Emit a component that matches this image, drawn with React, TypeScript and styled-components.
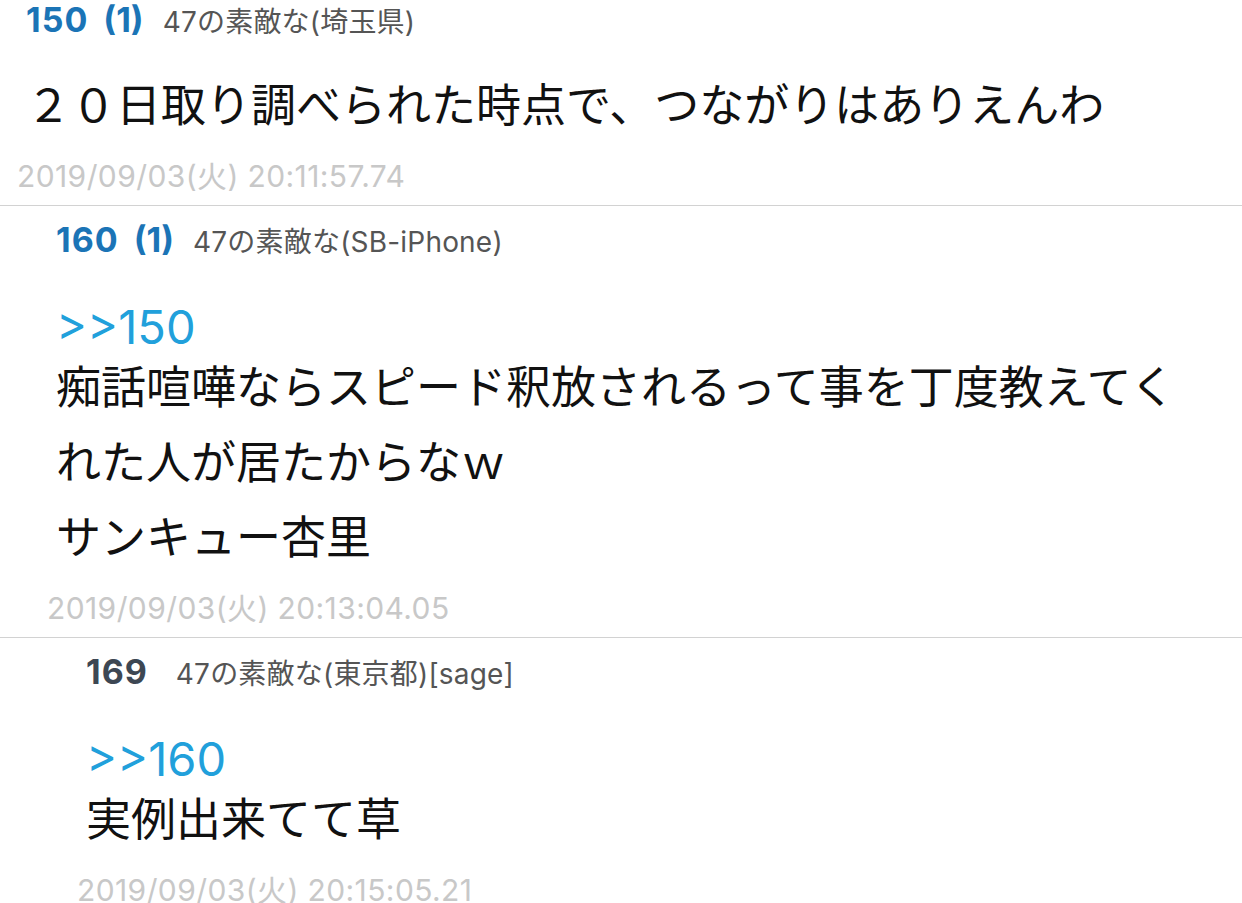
import React from "react";
import styled, { createGlobalStyle, css } from "styled-components";

const FONT = `Inter, "Noto Sans CJK JP", "Noto Sans", sans-serif`;

const GlobalStyle = createGlobalStyle`
  html, body {
    margin: 0;
    padding: 0;
    background: #ffffff;
    font-family: ${FONT};
    overflow: hidden;
  }
`;

const Thread = styled.main`
  width: 1242px;
`;

const Header = styled.header`
  display: flex;
  align-items: baseline;
  height: 40px;
  line-height: 40px;
  padding-left: 9px;
  white-space: nowrap;
`;

const ResNumber = styled.span<{ $replied: boolean }>`
  font-size: 34px;
  font-weight: 700;
  letter-spacing: 1px;
  color: ${(p) => (p.$replied ? "#1b74b6" : "#3d4753")};
`;

const ReplyCount = styled.span`
  margin-left: 15px;
  font-size: 34px;
  font-weight: 700;
  color: #1b74b6;
`;

const Name = styled.span<{ $wide: boolean }>`
  margin-left: ${(p) => (p.$wide ? 28 : 19)}px;
  font-size: 28px;
  letter-spacing: 0.2px;
  color: #555555;
`;

const Body = styled.div`
  margin-top: 30px;
  padding-left: 9px;
  font-size: 45px;
  line-height: 75px;
  color: #111111;
  white-space: nowrap;
`;

const Post = styled.article<{ $depth: number; $first: boolean }>`
  padding: 14px 0 9px ${(p) => 17 + p.$depth * 30}px;
  border-bottom: 1px solid #d2d2d2;
  ${(p) =>
    p.$first &&
    css`
      padding-top: 0;
      ${Body} {
        margin-top: 28px;
      }
    `}
`;

const Anchor = styled.a`
  display: block;
  padding-top: 13px;
  line-height: 47px;
  font-size: 47px;
  color: #21a0db;
  text-decoration: none;
`;

const Timestamp = styled.div`
  margin-top: 13px;
  height: 40px;
  line-height: 40px;
  font-size: 30px;
  letter-spacing: 0.4px;
  color: #c8c8c8;
  white-space: nowrap;
`;

type Res = {
  no: number;
  count?: number;
  name: string;
  anchor?: string;
  lines: string[];
  date: string;
  depth: number;
};

const posts: Res[] = [
  {
    no: 150,
    count: 1,
    name: "47の素敵な(埼玉県)",
    lines: ["２０日取り調べられた時点で、つながりはありえんわ"],
    date: "2019/09/03(火) 20:11:57.74",
    depth: 0,
  },
  {
    no: 160,
    count: 1,
    name: "47の素敵な(SB-iPhone)",
    anchor: ">>150",
    lines: [
      "痴話喧嘩ならスピード釈放されるって事を丁度教えてく",
      "れた人が居たからなｗ",
      "サンキュー杏里",
    ],
    date: "2019/09/03(火) 20:13:04.05",
    depth: 1,
  },
  {
    no: 169,
    name: "47の素敵な(東京都)[sage]",
    anchor: ">>160",
    lines: ["実例出来てて草"],
    date: "2019/09/03(火) 20:15:05.21",
    depth: 2,
  },
];

export default function App() {
  return (
    <>
      <GlobalStyle />
      <Thread>
        {posts.map((p, idx) => (
          <Post key={p.no} $depth={p.depth} $first={idx === 0}>
            <Header>
              <ResNumber $replied={!!p.count}>{p.no}</ResNumber>
              {p.count ? <ReplyCount>({p.count})</ReplyCount> : null}
              <Name $wide={!p.count}>{p.name}</Name>
            </Header>
            <Body>
              {p.anchor ? <Anchor href="#">{p.anchor}</Anchor> : null}
              {p.lines.map((l, i) => (
                <React.Fragment key={i}>
                  {i > 0 ? <br /> : null}
                  {l}
                </React.Fragment>
              ))}
            </Body>
            <Timestamp>{p.date}</Timestamp>
          </Post>
        ))}
      </Thread>
    </>
  );
}
